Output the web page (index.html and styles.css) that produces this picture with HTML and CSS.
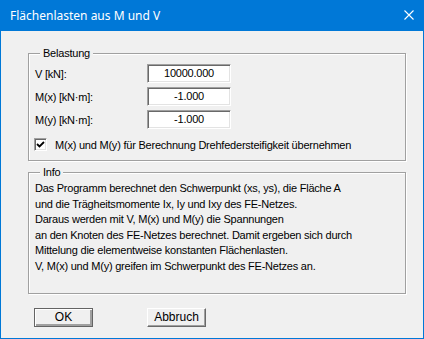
FILE: index.html
```html
<!DOCTYPE html>
<html>

<head lang="de">
    <meta charset="UTF-8">
    <title>Flächenlasten aus M und V</title>
    <link rel="stylesheet" href="styles.css">
</head>

<body>
    <div class="window">
        <div class="title-bar">
            <span class="title-text">Flächenlasten aus M und V</span>
            <span class="close-btn">
                <svg width="10" height="10" viewBox="0 0 10 10">
                    <path d="M0.5 0.5 L9.5 9.5 M9.5 0.5 L0.5 9.5" stroke="#ffffff" stroke-width="1.1" fill="none"/>
                </svg>
            </span>
        </div>

        <div class="dialog-body">
            <fieldset class="group">
                <legend>Belastung</legend>
                <div class="input-row">
                    <label>V [kN]:</label>
                    <div class="edit-box">10000.000</div>
                </div>
                <div class="input-row">
                    <label>M(x) [kN·m]:</label>
                    <div class="edit-box">-1.000</div>
                </div>
                <div class="input-row">
                    <label>M(y) [kN·m]:</label>
                    <div class="edit-box">-1.000</div>
                </div>
                <div class="check-row">
                    <span class="check-box">
                        <svg width="9" height="9" viewBox="0 0 9 9">
                            <path d="M1 4 L3.5 6.5 L8 2" stroke="#000000" stroke-width="1.8" fill="none"/>
                        </svg>
                    </span>
                    <span>M(x) und M(y) für Berechnung Drehfedersteifigkeit übernehmen</span>
                </div>
            </fieldset>

            <!-- Info -->
            <fieldset class="group group-info">
                <legend>Info</legend>
                <p class="info-text">
                    Das Programm berechnet den Schwerpunkt (xs, ys), die Fläche A<br>
                    und die Trägheitsmomente Ix, Iy und Ixy des FE-Netzes.<br>
                    Daraus werden mit V, M(x) und M(y) die Spannungen<br>
                    an den Knoten des FE-Netzes berechnet. Damit ergeben sich durch<br>
                    Mittelung die elementweise konstanten Flächenlasten.<br>
                    V, M(x) und M(y) greifen im Schwerpunkt des FE-Netzes an.
                </p>
            </fieldset>

            <div class="button-row">
                <div class="btn btn-default">OK</div>
                <div class="btn">Abbruch</div>
            </div>
        </div>
    </div>
</body>

</html>
```

FILE: styles.css
```css
body {
    margin: 0px;
    padding: 0px;
    background: #f0f0f0;
}

.window {
    width: 424px;
    height: 339px;
    box-sizing: border-box;
    border: 1px solid #0078d7;
    border-top: none;
    background: #f0f0f0;
    font-family: "Liberation Sans", Arial, sans-serif;
    font-size: 11px;
    letter-spacing: -0.22px;
    color: #000000;
}

.title-bar {
    height: 31px;
    margin: 0px -1px;
    background: #0078d7;
    display: flex;
    align-items: center;
    justify-content: space-between;
    padding: 0px 10px 0px 10px;
    letter-spacing: 0px;
}

.title-text {
    font-family: "Noto Sans", "Open Sans", sans-serif;
    font-size: 12px;
    color: #ffffff;
    margin-top: -1px;
}

.close-btn {
    display: flex;
    width: 10px;
    height: 10px;
    margin-top: -2px;
}

.dialog-body {
    padding: 15px 0px 0px 27px;
}

.group {
    width: 378px;
    box-sizing: border-box;
    margin: 0px;
    padding: 4px 6px 9px 6px;
    border: 1px solid #a0a0a0;
    box-shadow: 1px 1px 0px #ffffff, inset 1px 1px 0px #ffffff;
}

.group legend {
    padding: 0px 3px;
    margin-left: 5px;
    line-height: 14px;
    background: #f0f0f0;
}

.input-row {
    display: flex;
    align-items: center;
    height: 19px;
    margin-bottom: 4px;
}

.input-row label {
    width: 112px;
}

.edit-box {
    width: 84px;
    height: 19px;
    box-sizing: border-box;
    background: #ffffff;
    border-top: 1px solid #a0a0a0;
    border-left: 1px solid #a0a0a0;
    border-right: 1px solid #ffffff;
    border-bottom: 1px solid #ffffff;
    box-shadow: inset 1px 1px 0px #696969, inset -1px -1px 0px #e3e3e3;
    text-align: center;
    line-height: 17px;
}

.check-row {
    display: flex;
    align-items: center;
    gap: 8px;
    margin-top: 9px;
    margin-left: -1px;
    height: 13px;
}

.check-box {
    width: 13px;
    height: 13px;
    box-sizing: border-box;
    background: #ffffff;
    border-top: 1px solid #a0a0a0;
    border-left: 1px solid #a0a0a0;
    border-right: 1px solid #ffffff;
    border-bottom: 1px solid #ffffff;
    box-shadow: inset 1px 1px 0px #696969, inset -1px -1px 0px #e3e3e3;
    display: flex;
    align-items: center;
    justify-content: center;
}

.group-info {
    margin-top: 4px;
    padding: 2px 6px 18px 6px;
}

.info-text {
    margin: 0px;
    line-height: 15.6px;
}

.button-row {
    display: flex;
    gap: 54px;
    margin-top: 14px;
    padding-left: 6px;
}

.btn {
    width: 59px;
    height: 19px;
    box-sizing: border-box;
    text-align: center;
    line-height: 17px;
    font-size: 12px;
    letter-spacing: 0px;
    border-top: 1px solid #ffffff;
    border-left: 1px solid #ffffff;
    border-right: 1px solid #696969;
    border-bottom: 1px solid #696969;
    box-shadow: inset -1px -1px 0px #a0a0a0;
}

.btn-default {
    border: 1px solid #646464;
    box-shadow: inset 1px 1px 0px #ffffff, inset -1px -1px 0px #a0a0a0, inset -2px -2px 0px #a0a0a0;
}
```
